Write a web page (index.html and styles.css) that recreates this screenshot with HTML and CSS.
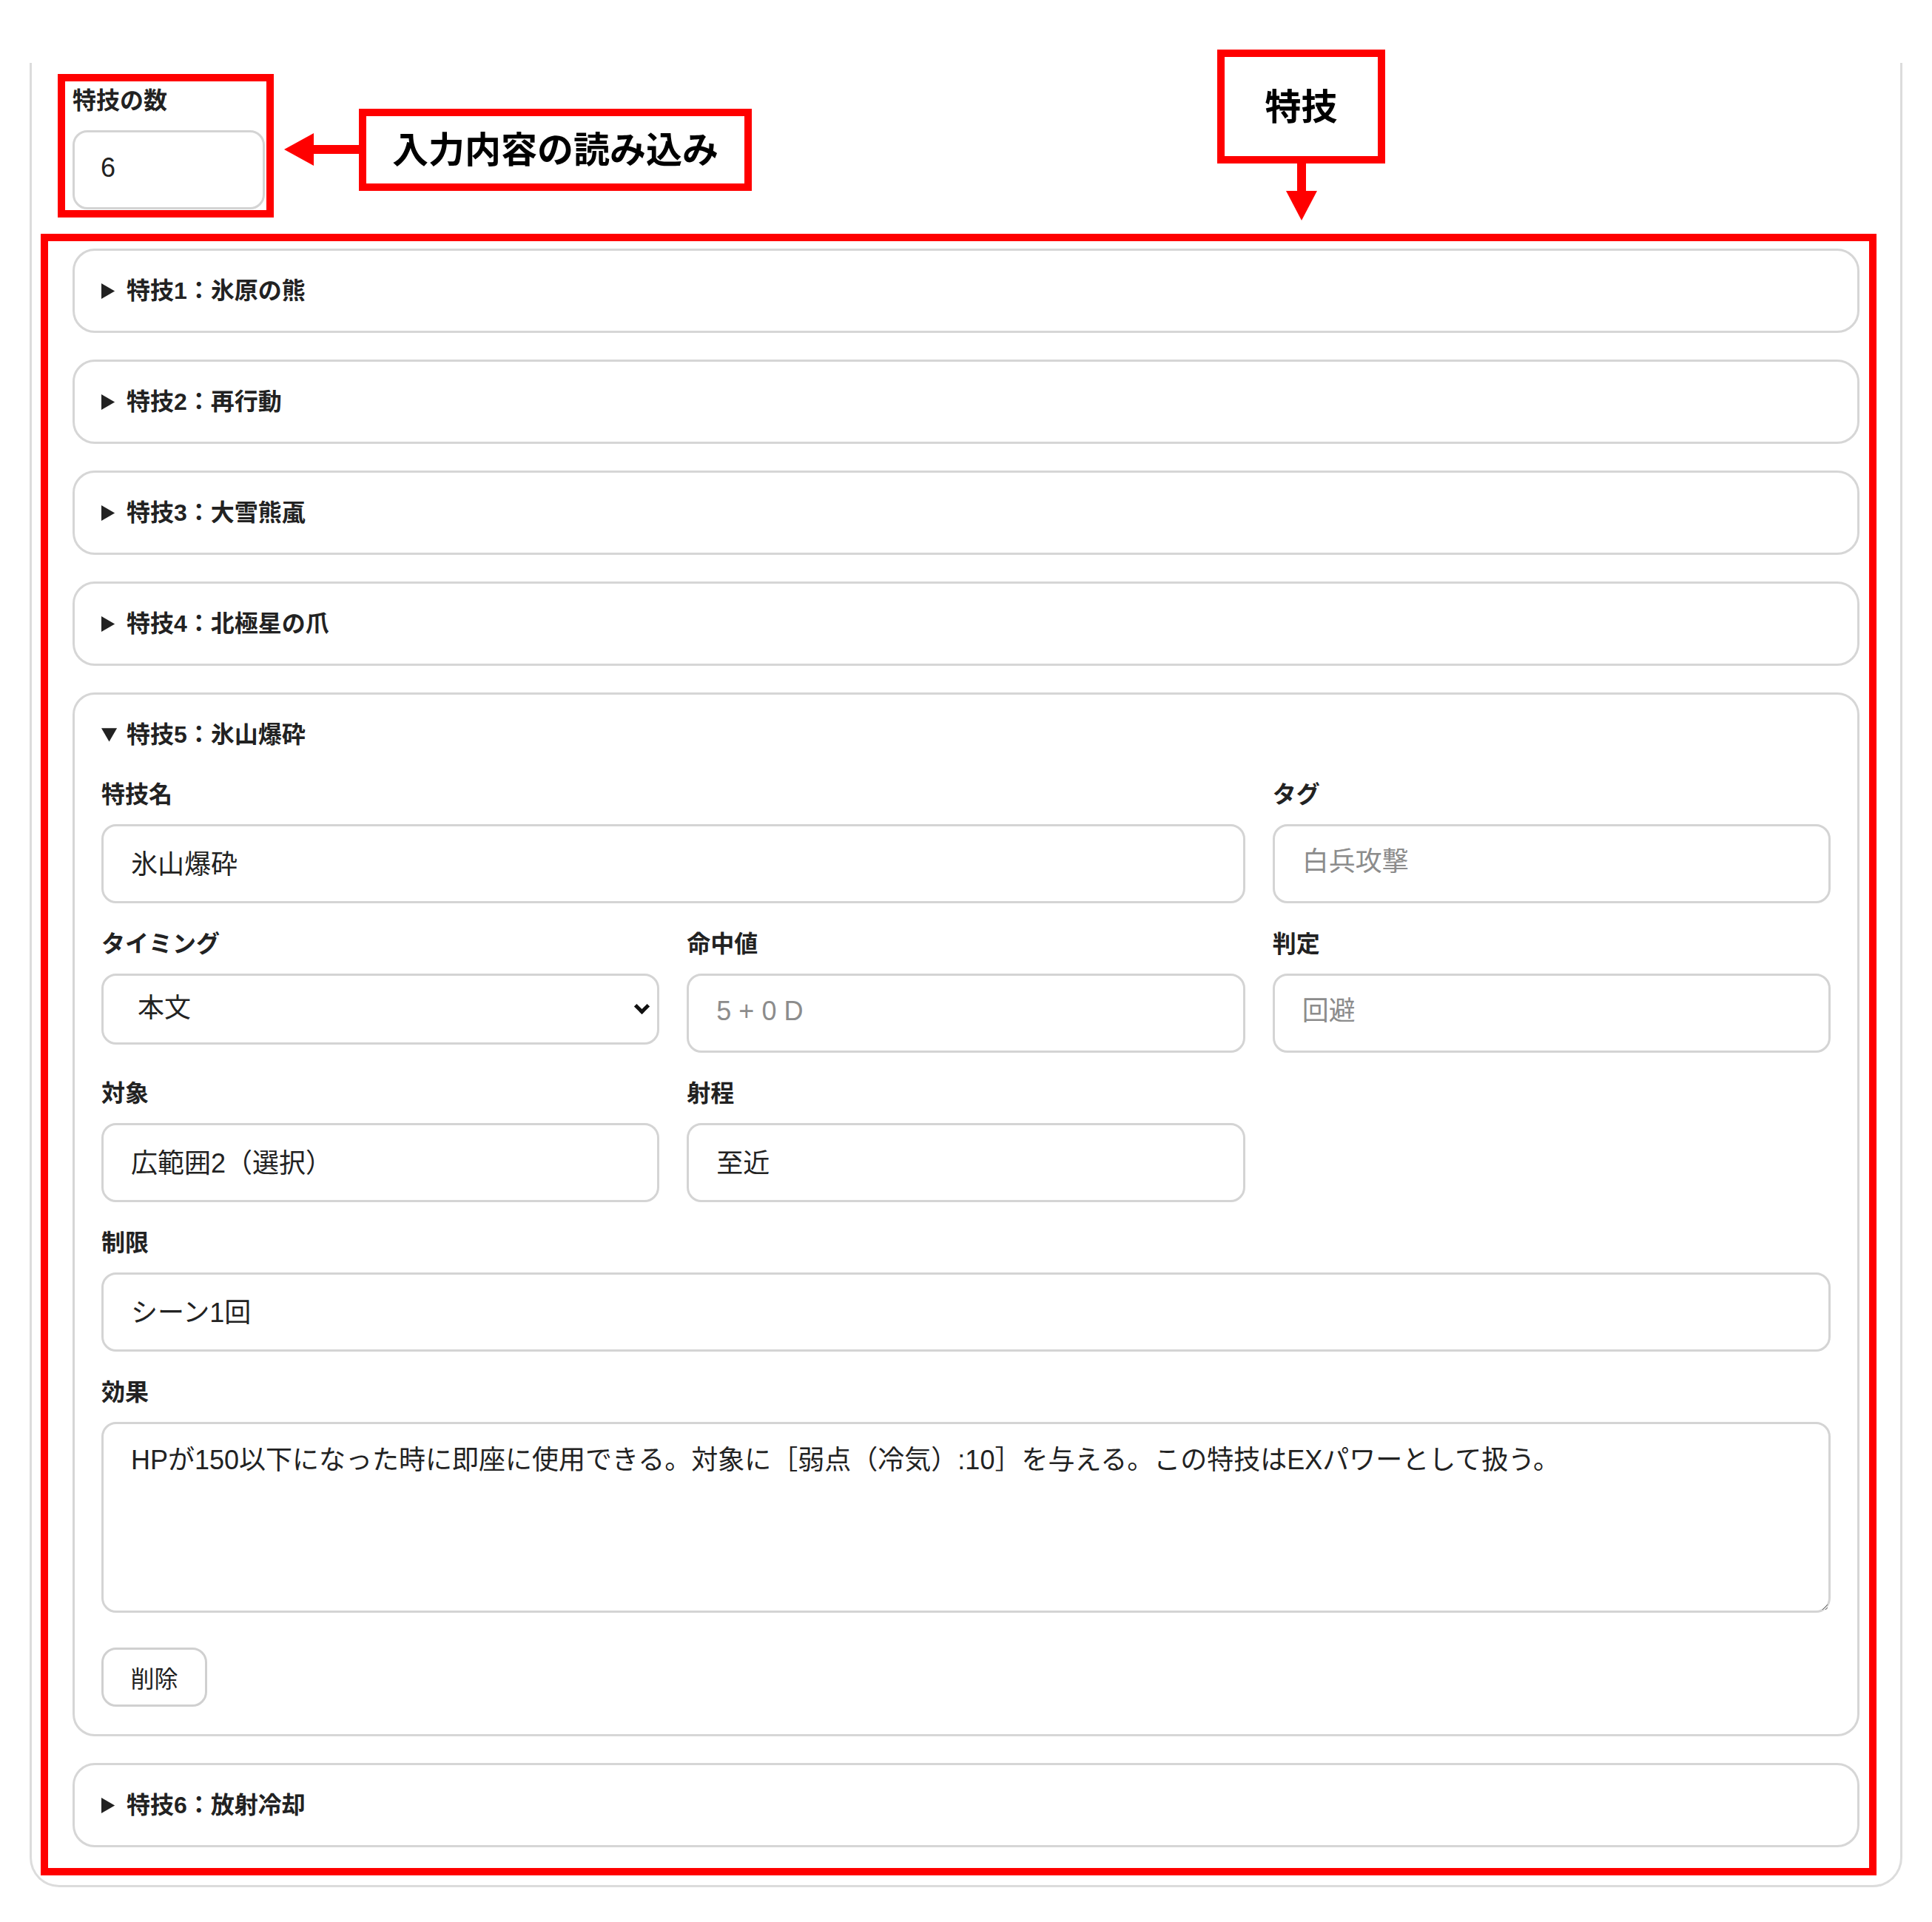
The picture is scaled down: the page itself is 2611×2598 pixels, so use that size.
FILE: index.html
```html
<!DOCTYPE html>
<html lang="ja">
<head>
    <meta charset="UTF-8">
    <meta name="viewport" content="width=device-width, initial-scale=1.0">
    <title>特技 - エネミー作成</title>
    <link rel="stylesheet" href="styles.css">
</head>
<body>

    <!-- Skill sheet -->
    <div class="sheet">
        <div class="count-field">
            <label for="skillCount">特技の数</label>
            <input id="skillCount" type="text" value="6">
        </div>

        <div class="skill-list">
            <details class="skill"><summary>特技1：氷原の熊</summary></details>
            <details class="skill"><summary>特技2：再行動</summary></details>
            <details class="skill"><summary>特技3：大雪熊颪</summary></details>
            <details class="skill"><summary>特技4：北極星の爪</summary></details>

            <details class="skill" open>
                <summary>特技5：氷山爆砕</summary>
                <div class="skill-form">
                    <div class="field span-2">
                        <label>特技名</label>
                        <input type="text" value="氷山爆砕">
                    </div>
                    <div class="field">
                        <label>タグ</label>
                        <input type="text" placeholder="白兵攻撃">
                    </div>
                    <div class="field">
                        <label>タイミング</label>
                        <div class="select-wrap">
                            <select>
                                <option selected>本文</option>
                                <option>メジャー</option>
                                <option>マイナー</option>
                                <option>常時</option>
                            </select>
                        </div>
                    </div>
                    <div class="field">
                        <label>命中値</label>
                        <input type="text" placeholder="5 + 0 D">
                    </div>
                    <div class="field">
                        <label>判定</label>
                        <input type="text" placeholder="回避">
                    </div>
                    <div class="field">
                        <label>対象</label>
                        <input type="text" value="広範囲2（選択）">
                    </div>
                    <div class="field">
                        <label>射程</label>
                        <input type="text" value="至近">
                    </div>
                    <div class="field span-3">
                        <label>制限</label>
                        <input type="text" value="シーン1回">
                    </div>
                    <div class="field span-3">
                        <label>効果</label>
                        <textarea>HPが150以下になった時に即座に使用できる。対象に［弱点（冷気）:10］を与える。この特技はEXパワーとして扱う。</textarea>
                    </div>
                </div>
                <button class="delete-btn">削除</button>
            </details>

            <details class="skill"><summary>特技6：放射冷却</summary></details>
        </div>
    </div>

    <!-- Annotations -->
    <div class="mark mark-count"></div>
    <div class="mark mark-list"></div>
    <div class="mark callout callout-load">入力内容の読み込み</div>
    <div class="mark callout callout-skill">特技</div>

    <svg class="arrow arrow-left" width="102" height="44" viewBox="0 0 102 44">
        <polygon points="0,22 40,0 40,44" fill="#ff0000"/>
        <rect x="39" y="16" width="63" height="12" fill="#ff0000"/>
    </svg>
    <svg class="arrow arrow-down" width="44" height="80" viewBox="0 0 44 80">
        <rect x="16" y="0" width="12" height="42" fill="#ff0000"/>
        <polygon points="1,38 43,38 22,78" fill="#ff0000"/>
    </svg>

</body>
</html>
```

FILE: styles.css
```css
/* General */
* {
    box-sizing: border-box;
}

body {
    margin: 0;
    position: relative;
    font-family: "Liberation Sans", "Noto Sans CJK JP", sans-serif;
    color: #222;
    background-color: #fff;
}

/* Sheet container (top edge is cut off in the capture) */
.sheet {
    margin: 85px 0 0 40px;
    width: 2531px;
    border: 3px solid #dcdcdc;
    border-top: none;
    border-radius: 0 0 40px 40px;
    padding: 31px 55px 51px;
}

label {
    display: block;
    font-size: 32px;
    line-height: 40px;
    font-weight: bold;
    margin-bottom: 20px;
}

input,
select,
textarea {
    width: 100%;
    font-family: inherit;
    font-size: 36px;
    color: #222;
    background-color: #fff;
    border: 3px solid #d4d4d4;
    border-radius: 20px;
    outline: none;
}

input {
    height: 107px;
    padding: 0 37px 6px;
}

input::placeholder,
textarea::placeholder {
    color: #8c8c8c;
}

/* Select with its own chevron */
.select-wrap {
    position: relative;
}

.select-wrap::after {
    content: "";
    position: absolute;
    right: 16px;
    top: 37px;
    width: 10px;
    height: 10px;
    border-right: 5px solid #111;
    border-bottom: 5px solid #111;
    transform: rotate(45deg);
    pointer-events: none;
}

select {
    display: block;
    height: 96px;
    padding: 0 60px 4px 46px;
    appearance: none;
    -webkit-appearance: none;
}

textarea {
    display: block;
    height: 258px;
    padding: 24px 37px;
    line-height: 1.4;
}

/* Count field */
.count-field {
    margin-bottom: 53px;
}

.count-field input {
    width: 260px;
    padding-left: 35px;
}

/* Skill list */
.skill-list {
    display: flex;
    flex-direction: column;
    gap: 36px;
}

.skill {
    border: 3px solid #d6d6d6;
    border-radius: 30px;
    padding: 33px 36px;
}

.skill[open] {
    padding-bottom: 37px;
}

.skill summary {
    font-size: 32px;
    line-height: 42px;
    font-weight: bold;
    cursor: pointer;
}

.skill-form {
    display: grid;
    grid-template-columns: repeat(3, 1fr);
    column-gap: 37px;
    row-gap: 35px;
    margin-top: 40px;
}

.span-2 {
    grid-column: span 2;
}

.span-3 {
    grid-column: span 3;
}

.delete-btn {
    display: block;
    margin-top: 47px;
    width: 143px;
    height: 80px;
    font-family: inherit;
    font-size: 32px;
    color: #222;
    background-color: #fff;
    border: 3px solid #d0d0d0;
    border-radius: 20px;
    cursor: pointer;
}

/* Red annotations drawn over the page */
.mark {
    position: absolute;
    border: 10px solid #ff0000;
}

.mark-count {
    left: 78px;
    top: 100px;
    width: 292px;
    height: 194px;
}

.mark-list {
    left: 55px;
    top: 316px;
    width: 2481px;
    height: 2219px;
}

.callout {
    display: flex;
    align-items: center;
    justify-content: center;
    padding-bottom: 8px;
    background-color: #fff;
    color: #000;
    font-size: 49px;
    font-weight: bold;
}

.callout-load {
    left: 485px;
    top: 147px;
    width: 531px;
    height: 111px;
}

.callout-skill {
    left: 1645px;
    top: 67px;
    width: 227px;
    height: 154px;
}

.arrow {
    position: absolute;
}

.arrow-left {
    left: 384px;
    top: 180px;
}

.arrow-down {
    left: 1737px;
    top: 220px;
}
```
